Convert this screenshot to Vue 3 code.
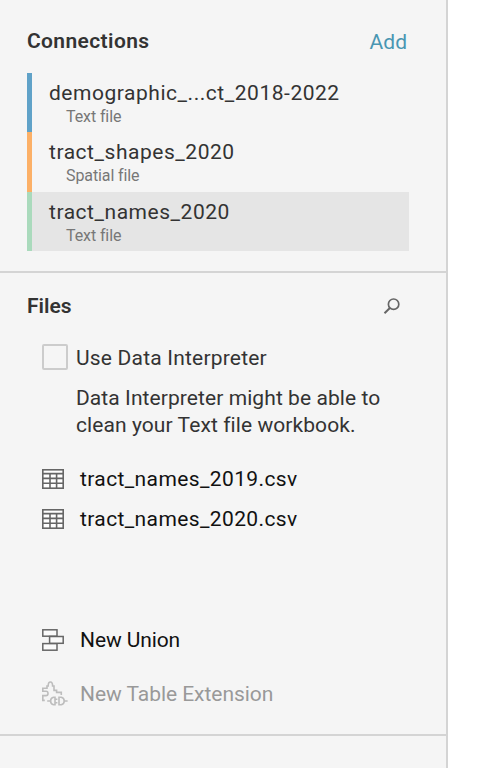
<script setup>
const connections = [
  { name: 'demographic_...ct_2018-2022', type: 'Text file', tone: 'blue' },
  { name: 'tract_shapes_2020', type: 'Spatial file', tone: 'orange' },
  { name: 'tract_names_2020', type: 'Text file', tone: 'green', selected: true },
]
const files = ['tract_names_2019.csv', 'tract_names_2020.csv']
</script>

<template>
  <aside class="panel">
    <section class="connections">
      <header class="head">
        <h2 class="title">Connections</h2>
        <a class="add">Add</a>
      </header>
      <ul class="list">
        <li v-for="c in connections" :key="c.name" class="connection" :class="[c.tone, { selected: c.selected }]">
          <span class="name">{{ c.name }}</span>
          <span class="type">{{ c.type }}</span>
        </li>
      </ul>
    </section>

    <section class="files">
      <header class="head">
        <h2 class="title files-title">Files</h2>
        <svg class="search" width="18" height="18" viewBox="0 0 18 18" fill="none" stroke="#666" stroke-width="1.7">
          <circle cx="10.6" cy="7.2" r="5.2" />
          <path d="M6.9 11 L1.5 16.3" stroke-width="2" />
        </svg>
      </header>

      <label class="interpreter">
        <span class="box"></span>
        <span class="label">Use Data Interpreter</span>
      </label>
      <p class="hint">Data Interpreter might be able to<br />clean your Text file workbook.</p>

      <ul class="list file-list">
        <li v-for="f in files" :key="f" class="file">
          <svg width="22" height="20" viewBox="0 0 22 20" fill="none" stroke="#666" stroke-width="1.6">
            <rect x="0" y="0" width="22" height="20" fill="#fff" stroke="none" />
            <rect x="0.8" y="0.8" width="20.4" height="18.4" />
            <path d="M1 4.6H21M1 9.4H21M1 14.3H21M8 4.6V19M14.6 4.6V19" />
          </svg>
          <span class="file-name">{{ f }}</span>
        </li>
      </ul>

      <div class="action union">
        <svg width="22" height="22" viewBox="0 0 22 22" fill="#fafafa" stroke="#666" stroke-width="1.5">
          <rect x="0.8" y="0.8" width="14.2" height="6.4" />
          <rect x="0.8" y="14.6" width="14.2" height="6.6" />
          <rect x="7.6" y="7.5" width="13.6" height="6.8" />
        </svg>
        <span class="union-label">New Union</span>
      </div>
      <div class="action extension">
        <svg width="26" height="25" viewBox="0 0 26 25" fill="none" stroke="#bdbdbd" stroke-width="1.6">
          <path d="M2.8 19.4H.8V14.6H4Q6 14.6 6 12.4T4 10.2H.8V7.2H5V5H6.2Q6.2 1 8.4 1T10.6 5H12V9.4H14.6V11.4H19.3V14" />
          <path d="M5.2 20H8.6M13 16.2H11.6Q8.6 16.8 8.6 20T11.6 23.8H13ZM13 18.2H15.4M13 21.8H15.4M17 16.2H19.2Q22.2 16.8 22.2 20T19.2 23.8H17ZM22.2 20H25.6" />
        </svg>
        <span class="extension-label">New Table Extension</span>
      </div>
    </section>
  </aside>
</template>

<style>
body {
  margin: 0;
  background: #fff;
}
</style>

<style scoped>
.panel {
  box-sizing: border-box;
  width: 448px;
  height: 768px;
  border-right: 2px solid #d4d4d4;
  background: #f5f5f5;
  color: #333;
  font-family: Roboto, "Liberation Sans", sans-serif;
  font-size: 21px;
  font-weight: 400;
  line-height: 26px;
  white-space: nowrap;
  overflow: hidden;
}
.connections {
  box-sizing: border-box;
  height: 273px;
  padding: 28px 37px 0 27px;
  border-bottom: 2px solid #d4d4d4;
}
.head {
  display: flex;
  justify-content: space-between;
}
.title {
  margin: 0;
  font-size: 21px;
  line-height: 26px;
  font-weight: 600;
  letter-spacing: 0.38px;
}
.files-title {
  letter-spacing: 0;
}
.add {
  color: #4996b2;
  margin: 1px 2px 0 0;
}
.list {
  list-style: none;
  margin: 0;
  padding: 0;
}
.connections .list {
  margin-top: 18px;
}
.connection {
  box-sizing: border-box;
  height: 59.3px;
  padding: 7px 0 0 17px;
  border-left: 5px solid;
  display: flex;
  flex-direction: column;
}
.name {
  color: #333;
  letter-spacing: 0.53px;
}
.type {
  margin-left: 17px;
  font-size: 16px;
  line-height: 22px;
  letter-spacing: -0.1px;
  color: #777;
}
.blue { border-color: #60a2c8; }
.orange { border-color: #fcb067; }
.green { border-color: #aadabc; }
.selected { background: #e5e5e5; }
.files {
  box-sizing: border-box;
  height: 463px;
  padding: 20px 45px 0 27px;
  border-bottom: 2px solid #d4d4d4;
}
.search {
  margin-top: 4px;
}
.interpreter {
  display: flex;
  gap: 8px;
  margin: 25px 0 0 15px;
}
.box {
  box-sizing: border-box;
  width: 26px;
  height: 26px;
  border: 2px solid #ccc;
  border-radius: 2px;
}
.label {
  margin-top: 1px;
  letter-spacing: 0.2px;
}
.hint {
  margin: 14px 0 0 49px;
  line-height: 27.3px;
  letter-spacing: 0.08px;
}
.file-list {
  margin: 19px 0 0 15px;
}
.file {
  display: flex;
  align-items: center;
  gap: 16px;
  height: 40.6px;
  color: #111;
}
.file-name {
  letter-spacing: 0.38px;
}
.action {
  display: flex;
  align-items: center;
  margin-left: 15px;
  height: 26px;
}
.union {
  gap: 16px;
  margin-top: 87px;
  color: #111;
}
.union-label {
  letter-spacing: -0.1px;
}
.extension {
  gap: 12px;
  margin-top: 28px;
  color: #999;
}
.extension-label {
  letter-spacing: -0.05px;
}
</style>
